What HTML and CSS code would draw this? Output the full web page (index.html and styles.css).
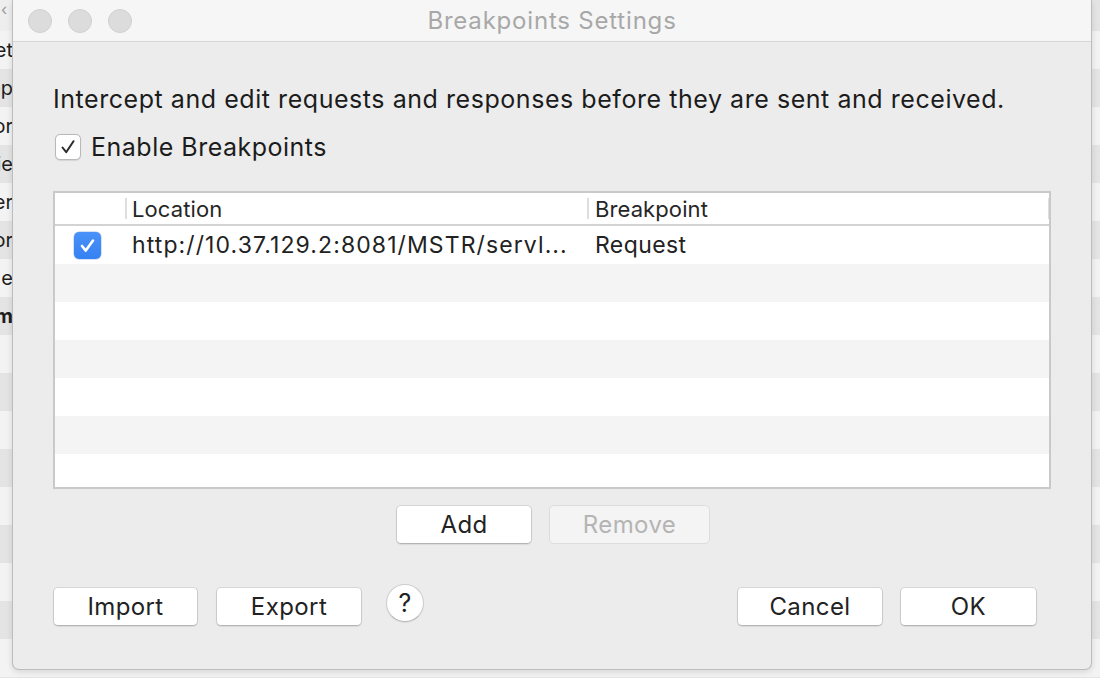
FILE: index.html
```html
<!DOCTYPE html>
<html>
<head>
<meta charset="utf-8">
<link rel="stylesheet" href="styles.css">
</head>
<body>
<div class="desk">
  <div class="side side-left">
    <div class="side-top">‹</div>
    <div class="side-row"><span>et</span></div>
    <div class="side-row"><span>ep</span></div>
    <div class="side-row"><span>or</span></div>
    <div class="side-row"><span>ie</span></div>
    <div class="side-row"><span>er</span></div>
    <div class="side-row"><span>or</span></div>
    <div class="side-row"><span>e</span></div>
    <div class="side-row bold"><span>m</span></div>
  </div>

  <div class="window">
    <div class="titlebar">
      <div class="lights">
        <span class="light"></span><span class="light"></span><span class="light"></span>
      </div>
      <div class="title">Breakpoints Settings</div>
    </div>

    <div class="content">
      <p class="intro">Intercept and edit requests and responses before they are sent and received.</p>

      <label class="enable">
        <span class="check">
          <svg viewBox="0 0 26 26" width="26" height="26"><path d="M7.5 13.5 L11.2 18.2 L18.5 7.2" fill="none" stroke="#2b2b2b" stroke-width="2" stroke-linecap="round" stroke-linejoin="round"/></svg>
        </span>
        <span class="enable-label">Enable Breakpoints</span>
      </label>

      <div class="table">
        <div class="thead">
          <div class="col c0"></div>
          <div class="col c1"><span class="sep"></span>Location</div>
          <div class="col c2"><span class="sep"></span>Breakpoint</div>
          <div class="col c3"><span class="sep"></span></div>
        </div>
        <div class="tbody">
          <div class="row">
            <div class="col c0">
              <span class="bluecheck">
                <svg viewBox="0 0 27 27" width="27" height="27"><path d="M8 14 L11.8 18.6 L19 8.6" fill="none" stroke="#ffffff" stroke-width="2.6" stroke-linecap="round" stroke-linejoin="round"/></svg>
              </span>
            </div>
            <div class="col c1 cell url">http://10.37.129.2:8081/MSTR/servl...</div>
            <div class="col c2 cell">Request</div>
          </div>
          <div class="row alt"></div>
          <div class="row"></div>
          <div class="row alt"></div>
          <div class="row"></div>
          <div class="row alt"></div>
          <div class="row"></div>
        </div>
      </div>

      <div class="addrow">
        <button class="btn add">Add</button>
        <button class="btn remove" disabled>Remove</button>
      </div>

      <div class="bottom">
        <div class="group">
          <button class="btn import">Import</button>
          <button class="btn export">Export</button>
          <button class="help">?</button>
        </div>
        <div class="group right">
          <button class="btn cancel">Cancel</button>
          <button class="btn ok">OK</button>
        </div>
      </div>
    </div>
  </div>

  <div class="side side-right"></div>
</div>
</body>
</html>
```

FILE: styles.css
```css
* { box-sizing: border-box; }

html, body {
  margin: 0;
  padding: 0;
  width: 1100px;
  height: 678px;
  overflow: hidden;
}

body {
  font-family: "Inter", "Liberation Sans", sans-serif;
  color: #222;
  background: #ececec;
}

.desk {
  display: flex;
  align-items: flex-start;
  width: 1100px;
  height: 678px;
  background:
    repeating-linear-gradient(to bottom,
      #f3f3f3 0px, #f3f3f3 38px,
      #e4e4e4 38px, #e4e4e4 76px);
  background-position: 0 31px;
}

.side {
  flex: 0 0 auto;
  height: 678px;
  overflow: hidden;
}

.side-left {
  width: 12px;
  display: flex;
  flex-direction: column;
}

.side-top {
  height: 31px;
  background: #eeeeee;
  font-size: 16px;
  color: #999;
  line-height: 18px;
  padding-left: 1px;
}

.side-row {
  height: 38px;
  display: flex;
  justify-content: flex-end;
  align-items: center;
  overflow: hidden;
  font-size: 20px;
  color: #1e1e1e;
  white-space: nowrap;
}

.side-row span { margin-right: -1px; }
.side-row.bold { font-weight: 700; }

.side-right {
  width: 8px;
}

.window {
  flex: 0 0 1080px;
  width: 1080px;
  height: 670px;
  background: #ececec;
  border: 1px solid #bdbdbd;
  border-top: none;
  border-radius: 0 0 7px 7px;
  box-shadow: 0 2px 6px rgba(0,0,0,0.12);
  display: flex;
  flex-direction: column;
  overflow: hidden;
}

.titlebar {
  height: 42px;
  flex: 0 0 42px;
  background: #f6f6f6;
  border-bottom: 1px solid #d6d6d6;
  display: flex;
  align-items: center;
  position: relative;
}

.lights {
  display: flex;
  gap: 16px;
  padding-left: 15px;
}

.light {
  width: 24px;
  height: 24px;
  border-radius: 50%;
  background: #dcdcdc;
  border: 1px solid #d0d0d0;
}

.title {
  position: absolute;
  left: 0;
  right: 0;
  top: 0;
  height: 41px;
  line-height: 41px;
  text-align: center;
  font-size: 24px;
  letter-spacing: 0.8px;
  color: #a8a8a8;
  pointer-events: none;
}

.content {
  flex: 1 1 auto;
  padding: 43px 40px 0 40px;
  display: flex;
  flex-direction: column;
}

.intro {
  margin: 0;
  font-size: 25px;
  letter-spacing: 0.55px;
  line-height: 28px;
  color: #1c1c1c;
  white-space: nowrap;
}

.enable {
  margin-top: 21px;
  display: flex;
  align-items: center;
  gap: 10px;
  padding-left: 2px;
}

.check {
  width: 26px;
  height: 26px;
  border-radius: 5px;
  background: #ffffff;
  border: 1px solid #b9b9b9;
  box-shadow: 0 0.5px 1px rgba(0,0,0,0.1);
  display: flex;
}

.check svg { display: block; margin: -1px; }

.enable-label {
  font-size: 25px;
  letter-spacing: 0.5px;
  color: #1c1c1c;
  line-height: 26px;
}

.table {
  margin-top: 31px;
  width: 998px;
  height: 298px;
  border: 2px solid #c9c9c9;
  background: #ffffff;
  display: flex;
  flex-direction: column;
  overflow: hidden;
}

.thead {
  flex: 0 0 33px;
  height: 33px;
  display: flex;
  border-bottom: 2px solid #d3d3d3;
  background: #ffffff;
}

.col {
  position: relative;
  display: flex;
  align-items: center;
  font-size: 22px;
  letter-spacing: 0.1px;
  color: #262626;
  white-space: nowrap;
}

.c0 { width: 70px; flex: 0 0 70px; }
.c1 { width: 462px; flex: 0 0 462px; padding-left: 7px; }
.c2 { width: 461px; flex: 0 0 461px; padding-left: 8px; }
.c3 { flex: 1 1 auto; }

.sep {
  position: absolute;
  left: 0;
  top: 5px;
  width: 2px;
  height: 21px;
  background: #dedede;
}

.tbody {
  flex: 1 1 auto;
  overflow: hidden;
  display: flex;
  flex-direction: column;
}

.row {
  flex: 0 0 38px;
  height: 38px;
  display: flex;
  background: #ffffff;
}

.row.alt { background: #f4f4f4; }

.row .c0 { padding-left: 19px; }

.bluecheck {
  width: 27px;
  height: 27px;
  border-radius: 5px;
  background: linear-gradient(#4a92f8, #3681f3);
  box-shadow: 0 0 0 0.5px rgba(20,80,200,0.35);
  display: flex;
}

.bluecheck svg { display: block; }

.cell {
  font-size: 23px;
  letter-spacing: 0.4px;
  color: #222;
}

.cell.url { letter-spacing: 1.1px; }

.addrow {
  margin-top: 16px;
  display: flex;
  justify-content: center;
  gap: 17px;
  padding-left: 2px;
}

.btn {
  font-family: "Inter", "Liberation Sans", sans-serif;
  font-size: 24px;
  letter-spacing: 0.4px;
  color: #222;
  height: 39px;
  background: #ffffff;
  border: 1px solid #cbcbcb;
  border-top-color: #d6d6d6;
  border-bottom-color: #b4b4b4;
  border-radius: 5px;
  box-shadow: 0 1px 1px rgba(0,0,0,0.08);
  padding: 0;
  display: flex;
  align-items: center;
  justify-content: center;
}

.add { width: 136px; }

.remove {
  width: 161px;
  background: #f4f4f4;
  color: #b4b4b4;
  border-color: #dddddd;
  box-shadow: none;
}

.bottom {
  margin-top: 43px;
  display: flex;
  justify-content: space-between;
  align-items: center;
  padding-right: 14px;
}

.group {
  display: flex;
  align-items: center;
  gap: 18px;
}

.group.right { gap: 17px; }

.import { width: 145px; }
.export { width: 146px; }
.cancel { width: 146px; }
.ok { width: 137px; }

.help {
  margin-left: 6px;
  margin-top: -8px;
  width: 38px;
  height: 38px;
  border-radius: 50%;
  background: #ffffff;
  border: 1px solid #cccccc;
  border-bottom-color: #b8b8b8;
  box-shadow: 0 1px 1px rgba(0,0,0,0.08);
  font-family: "Inter", "Liberation Sans", sans-serif;
  font-size: 25px;
  color: #222;
  padding: 0;
  display: flex;
  align-items: center;
  justify-content: center;
}
```
